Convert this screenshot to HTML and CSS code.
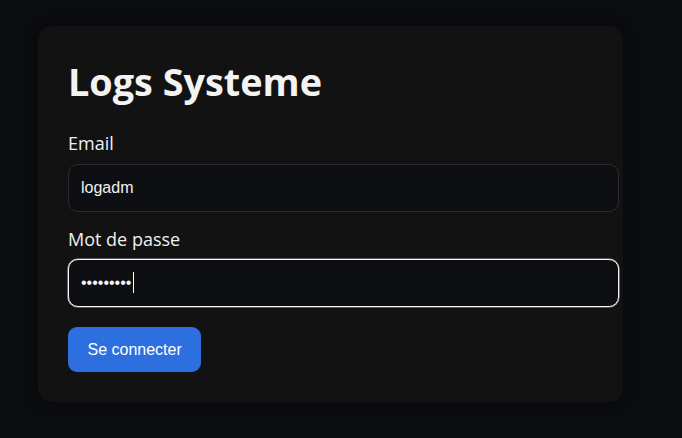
FILE: index.html
```html
<!DOCTYPE html>
<html lang="fr">
<head>
<meta charset="utf-8">
<title>Logs Systeme</title>
<link rel="stylesheet" href="styles.css">
</head>
<body>
<main class="card">
  <h1 class="title">Logs Systeme</h1>
  <form class="form">
    <label class="label" for="email">Email</label>
    <input class="field" id="email" type="text" value="logadm">
    <label class="label label-pwd" for="pwd">Mot de passe</label>
    <span class="field-wrap">
      <input class="field field-focus" id="pwd" type="password" value="123456789">
    </span>
    <button class="btn" type="button">Se connecter</button>
  </form>
</main>
</body>
</html>
```

FILE: styles.css
```css
html, body {
  margin: 0;
  background: #0b0c10;
}
body {
  padding: 26px 38px;
  font-family: "Open Sans", "Noto Sans", sans-serif;
  color: #f2f2f2;
}
.card {
  width: 525px;
  padding: 30px;
  background: #121212;
  border-radius: 14px;
  box-shadow: 0 0 12px rgba(0,0,0,0.35);
}
.title {
  margin: 0 0 23px;
  font-size: 37.8px;
  line-height: 52px;
  font-weight: 700;
  color: #f3f3f3;
}
.form {
  display: block;
}
.label {
  display: block;
  font-size: 18px;
  line-height: 24px;
  margin-bottom: 9px;
  color: #f0f0f0;
}
.label-pwd {
  margin-bottom: 8px;
}
.field {
  display: block;
  width: 100%;
  margin: 0 0 15px;
  padding: 14px 12px;
  line-height: 18px;
  font-family: "Liberation Sans", Arial, sans-serif;
  font-size: 16px;
  color: #f2f2f2;
  background: #0e0f13;
  border: 1px solid #2c2c2e;
  border-radius: 10px;
  outline: none;
}
.field-wrap {
  display: block;
  position: relative;
  margin-bottom: 20px;
}
.field-wrap::after {
  content: "";
  position: absolute;
  left: 65px;
  top: 13px;
  width: 1px;
  height: 21px;
  background: #ffffff;
}
.field-focus {
  margin: 0;
  border-color: #f4f4f4;
  box-shadow: 0 0 0 0.6px rgba(255,255,255,0.6);
}
.btn {
  display: block;
  height: 45px;
  padding: 0 19.5px;
  font-family: "Liberation Sans", Arial, sans-serif;
  font-size: 16px;
  color: #ffffff;
  background: #2e6fdf;
  border: none;
  border-radius: 9px;
}
```
